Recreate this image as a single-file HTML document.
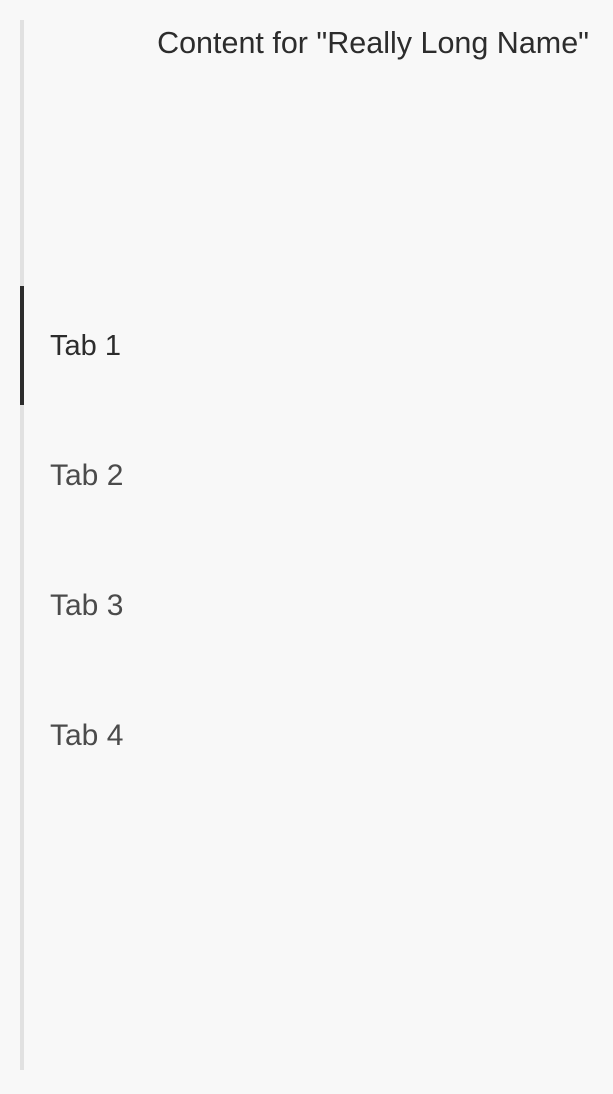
<!DOCTYPE html>
<html><head><style>
html,body{margin:0;padding:0;background:#f8f8f8;width:613px;height:1094px;overflow:hidden;font-family:"Liberation Sans",sans-serif;}
.line{position:absolute;left:20px;top:20px;width:4px;height:1050px;background:#e1e1e1;}
.ind{position:absolute;left:20px;top:286px;width:4px;height:119px;background:#2c2c2c;}
.t{position:absolute;left:50px;font-size:30px;color:#4b4b4b;line-height:30px;}
.h{position:absolute;right:24px;top:28px;font-size:30.5px;color:#2c2c2c;line-height:30px;white-space:nowrap;}
</style></head><body>
<div class="line"></div><div class="ind"></div>
<div class="h">Content for "Really Long Name"</div>
<div class="t" style="top:331px;color:#2c2c2c;font-size:29px">Tab 1</div>
<div class="t" style="top:461px">Tab 2</div>
<div class="t" style="top:591px">Tab 3</div>
<div class="t" style="top:721px">Tab 4</div>
</body></html>
